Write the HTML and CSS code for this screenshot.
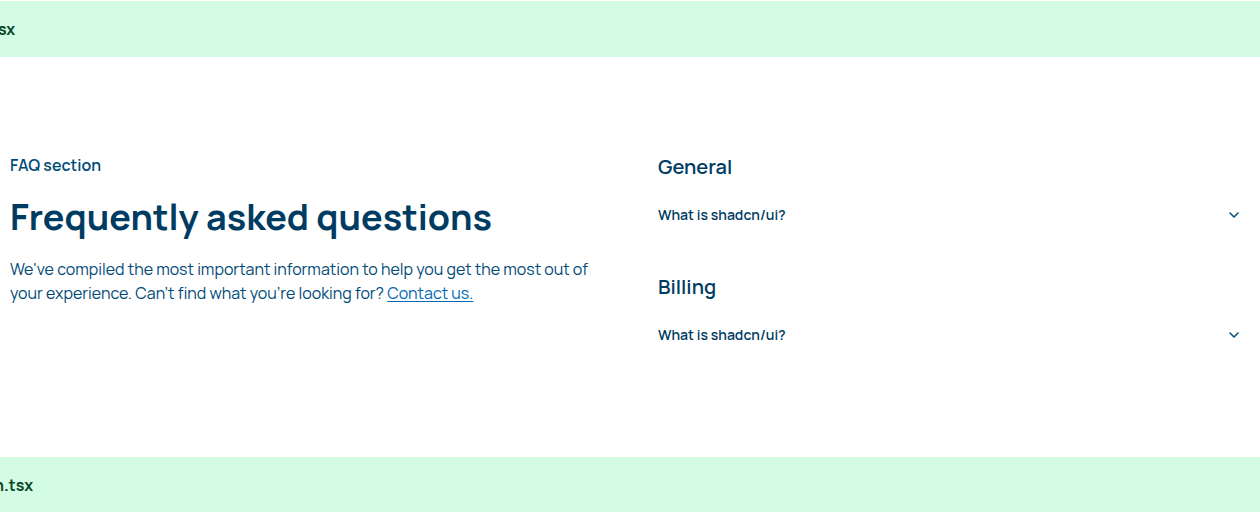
FILE: index.html
```
<!DOCTYPE html>
<html lang="en">
<head>
<meta charset="utf-8">
<title>Frequently asked questions</title>
<link rel="stylesheet" href="styles.css">
</head>
<body>
<header class="banner banner-first"><span class="file-name">sx</span></header>
<main class="faq">
  <div class="intro">
    <p class="tagline">FAQ section</p>
    <h1 class="title">Frequently asked questions</h1>
    <p class="lead">We've compiled the most important information to help you get the most out of your experience. Can’t find what you’re looking for? <a class="link" href="#contact">Contact us.</a></p>
  </div>
  <div class="groups">
    <section class="group">
      <h2 class="group-title">General</h2>
      <button class="question" type="button" aria-expanded="false">What is shadcn/ui?
        <svg class="chevron" viewBox="0 0 16 16" aria-hidden="true"><path d="M4 6l4 4 4-4"/></svg>
      </button>
    </section>
    <section class="group">
      <h2 class="group-title">Billing</h2>
      <button class="question" type="button" aria-expanded="false">What is shadcn/ui?
        <svg class="chevron" viewBox="0 0 16 16" aria-hidden="true"><path d="M4 6l4 4 4-4"/></svg>
      </button>
    </section>
  </div>
</main>
<div class="banner"><span class="file-name file-name-long">n.tsx</span></div>
</body>
</html>
```
FILE: styles.css
```
* { box-sizing: border-box; }
body {
  margin: 0;
  background: #fff;
  color: #003c62;
  font: 400 16px/24px Manrope, Inter, sans-serif;
  overflow: hidden;
}
h1, h2, p { margin: 0; }
.banner {
  padding: 16px 0;
  background: #d4fce4;
  color: #0a4726;
  font-weight: 700;
  overflow: hidden;
}
.banner-first { margin-top: 1px; }
.file-name { display: block; margin-left: -2px; }
.file-name-long { margin-left: -6px; }
.faq {
  display: grid;
  grid-template-columns: 1fr 1fr;
  gap: 64px;
  padding: 96px 18px 96px 10px;
}
.intro {
  display: flex;
  flex-direction: column;
  gap: 20px;
}
.tagline { color: #004a77; font-weight: 600; }
.title { font-size: 36px; line-height: 40px; font-weight: 700; }
.lead { color: #004a77; font-weight: 400; }
.link { color: #0069b4; text-underline-offset: 2px; }
.groups {
  display: flex;
  flex-direction: column;
  gap: 32px;
}
.group { height: 88px; }
.group-title {
  margin-bottom: 8px;
  font-size: 20px;
  line-height: 28px;
  font-weight: 600;
}
.question {
  display: flex;
  align-items: center;
  justify-content: space-between;
  width: 100%;
  padding: 16px 0;
  border: 0;
  background: none;
  color: inherit;
  font: inherit;
  font-size: 14px;
  line-height: 20px;
  font-weight: 600;
  text-align: left;
}
.chevron {
  width: 16px;
  height: 16px;
  fill: none;
  stroke: #004a77;
  stroke-width: 1.5;
  stroke-linecap: round;
  stroke-linejoin: round;
}
```
